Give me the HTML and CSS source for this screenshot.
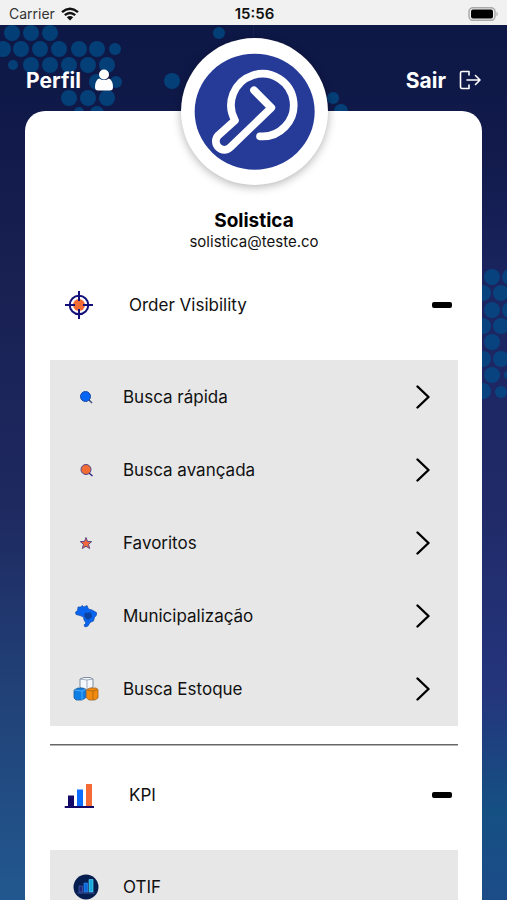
FILE: index.html
```html
<!DOCTYPE html>
<html lang="pt-BR">
<head>
<meta charset="utf-8">
<meta name="viewport" content="width=device-width, initial-scale=1">
<title>Perfil</title>
<link rel="stylesheet" href="styles.css">
</head>
<body>
<div class="app">
  <div class="status">
    <div class="carrier">
      <span>Carrier</span>
      <svg width="18" height="14" viewBox="0 0 18 14" fill="none" stroke="#111" stroke-width="2.4"><path d="M1 5.2Q9-1.6 17 5.2"/><path d="M3.8 8.2Q9 3.8 14.2 8.2"/><path d="M9 13.5L5.8 10.3Q9 7.8 12.2 10.3Z" fill="#111" stroke="none"/></svg>
    </div>
    <time class="clock">15:56</time>
    <svg class="battery" width="32" height="14" viewBox="0 0 32 14"><rect x="1" y=".7" width="26" height="12.6" rx="4" fill="#eee" stroke="#aaa" stroke-width="1.5"/><rect x="3" y="2.6" width="22" height="8.8" rx="2" fill="#000"/><path d="M28.5 4.5Q31 7 28.5 9.5Z" fill="#aaa"/></svg>
  </div>
  <main class="stage">
    <svg class="dots dots-left" width="360" height="100" viewBox="0 25 360 100" aria-hidden="true">
      <circle cx="12" cy="33" r="8"/><circle cx="31" cy="33" r="8"/><circle cx="50" cy="33" r="8"/>
      <circle cx="3" cy="49" r="8"/><circle cx="21" cy="49" r="8"/><circle cx="40" cy="49" r="8"/><circle cx="59" cy="49" r="8"/><circle cx="79" cy="49" r="8"/><circle cx="97" cy="49" r="8"/><circle cx="115" cy="49" r="6"/>
      <circle cx="13" cy="65" r="5"/><circle cx="31" cy="65" r="8"/><circle cx="50" cy="65" r="8"/><circle cx="69" cy="65" r="8"/><circle cx="88" cy="65" r="8"/><circle cx="107" cy="65" r="8"/>
      <circle cx="97" cy="82" r="8"/><circle cx="116" cy="82" r="6"/>
      <circle cx="69" cy="98" r="8"/><circle cx="88" cy="98" r="8"/><circle cx="107" cy="98" r="8"/><circle cx="79" cy="112" r="5"/><circle cx="97" cy="113" r="7"/>
      <circle cx="219" cy="33" r="6"/><circle cx="172" cy="81" r="8"/><circle cx="333" cy="98" r="6"/><circle cx="341" cy="111" r="7"/>
    </svg>
    <svg class="dots dots-right" width="25" height="130" viewBox="482 269 25 130" aria-hidden="true">
      <circle cx="492" cy="277" r="8"/><circle cx="510" cy="277" r="8"/><circle cx="483" cy="293" r="8"/><circle cx="501" cy="293" r="8"/><circle cx="492" cy="310" r="8"/><circle cx="510" cy="310" r="8"/><circle cx="483" cy="326" r="8"/><circle cx="501" cy="326" r="8"/><circle cx="492" cy="342" r="8"/><circle cx="483" cy="359" r="8"/><circle cx="501" cy="359" r="8"/><circle cx="492" cy="375" r="8"/><circle cx="508" cy="375" r="4"/><circle cx="483" cy="391" r="8"/><circle cx="501" cy="392" r="6"/>
    </svg>
    <nav class="topbar">
      <a class="toplink" href="#perfil">Perfil
        <svg width="20" height="22" viewBox="0 0 20 22" fill="#fff"><path d="M5 9.500Q1 11.500 1 18Q1 21.500 4 21.500H16Q19 21.500 19 18Q19 11.500 15 9.500Q10 12.500 5 9.500Z"/><circle cx="10" cy="5.500" r="5"/></svg>
      </a>
      <a class="toplink" href="#sair">Sair
        <svg width="22" height="20" viewBox="0 0 22 20" fill="none" stroke="#fff" stroke-width="1.6" stroke-linecap="round" stroke-linejoin="round"><path d="M10 1.5H3Q1.5 1.5 1.5 3V16.5Q1.5 18.5 3 18.5H10V15M10 1.5V5M8 10H21M16.500 5.500L21 10L16.500 14.500"/></svg>
      </a>
    </nav>
    <section class="card">
      <svg class="avatar" viewBox="31 21 441 441" role="img" aria-label="Solistica">
        <ellipse cx="252" cy="242" rx="180" ry="174" fill="#263a98"/>
        <path d="M268 316A94 94 0 1 0 193 268L143 313A25 25 0 0 0 179 349L302 230L250 178" fill="none" stroke="#fff" stroke-width="23" stroke-linecap="round" stroke-linejoin="round"/>
      </svg>
      <h1 class="name">Solistica</h1>
      <p class="email">solistica@teste.co</p>

      <section class="group">
        <button class="group-head" type="button" aria-expanded="true">
          <svg class="group-icon" viewBox="0 0 30 30" fill="none"><circle cx="15" cy="15" r="6" fill="#f26b35"/><circle cx="15" cy="15" r="9.300" stroke="#14107a" stroke-width="2"/><path d="M15 1V11M15 19V29M1 15H11M19 15H29" stroke="#14107a" stroke-width="2"/></svg>
          <span class="label">Order Visibility</span>
          <span class="minus"></span>
        </button>
        <ul class="menu">
          <li><a class="item" href="#rapida">
            <svg class="item-icon" viewBox="0 0 26 26"><path d="M16 16L19 19" stroke="#3a4a78" stroke-width="1.4"/><circle cx="12.500" cy="12.500" r="5" fill="#0866f5" stroke="#1748a5"/></svg>
            <span class="label">Busca rápida</span><svg class="chevron" viewBox="0 0 14 24"><path d="M1.500 1.500L12.500 12L1.500 22.500"/></svg></a></li>
          <li><a class="item" href="#avancada">
            <svg class="item-icon" viewBox="0 0 26 26"><path d="M16 16L19.500 19" stroke="#29237a" stroke-width="1.400"/><circle cx="13" cy="12.500" r="5" fill="#f26b35" stroke="#51458a"/></svg>
            <span class="label">Busca avançada</span><svg class="chevron" viewBox="0 0 14 24"><path d="M1.500 1.500L12.500 12L1.500 22.500"/></svg></a></li>
          <li><a class="item" href="#favoritos">
            <svg class="item-icon" viewBox="0 0 26 26"><path d="M13 7.500L14.500 11.500L18.700 11.600L15.500 14.300L16.600 18.500L13 16.200L9.400 18.500L10.500 14.300L7.300 11.600L11.500 11.500Z" fill="#f4683d" stroke="#5b477f"/></svg>
            <span class="label">Favoritos</span><svg class="chevron" viewBox="0 0 14 24"><path d="M1.500 1.500L12.500 12L1.500 22.500"/></svg></a></li>
          <li><a class="item" href="#municipalizacao">
            <svg class="item-icon" viewBox="0 0 26 26"><path d="M5 4L8 4L9 2.500L11 4L14 2.500L15.500 6L19 7L23.500 9.500L23.500 12L21.500 14.500L20.500 18L17 19.500L15 23L12 24L11 22L13 20L11 17L10.500 14L7 12.500L3 11.500L2.500 9L4.500 7.500Z" fill="#0965ef" stroke="#174fae" stroke-width=".7"/><path d="M11.500 10L18 9.500L19 14L15 17L11.500 14Z" fill="#0b429f"/></svg>
            <span class="label">Municipalização</span><svg class="chevron" viewBox="0 0 14 24"><path d="M1.500 1.500L12.500 12L1.500 22.500"/></svg></a></li>
          <li><a class="item" href="#estoque">
            <svg class="item-icon" viewBox="0 0 26 26" stroke-width=".8" stroke-linejoin="round"><path d="M7 3L11 1.500H17L20 3V11L17 13H9L7 11Z" fill="#f4f7fc" stroke="#66758d"/><path d="M7 3L14 4L20 3M14 4V12" fill="none" stroke="#8f9db0"/><path d="M1 14L5 12H10L12.500 13.500V22L9 24H3L1 22Z" fill="#0c7fe6" stroke="#245b94"/><path d="M1 14L9 15L12.500 13.500M9 15V24" fill="none" stroke="#63b6ff"/><path d="M13.500 14L17 12H23L25 13.500V22L22 24H16L13.500 22Z" fill="#f18a0d" stroke="#a1672c"/><path d="M13.500 14L20 15L25 13.500M20 15V24" fill="none" stroke="#a96314"/></svg>
            <span class="label">Busca Estoque</span><svg class="chevron" viewBox="0 0 14 24"><path d="M1.500 1.500L12.500 12L1.500 22.500"/></svg></a></li>
        </ul>
      </section>
      <hr class="rule">
      <section class="group">
        <button class="group-head" type="button" aria-expanded="true">
          <svg class="group-icon" viewBox="0 0 30 30"><path d="M4 15.500H10V27H4Z" fill="#130768"/><path d="M13 9.500H19V27H13Z" fill="#0d6dff"/><path d="M22 4H28V27H22Z" fill="#f46b35"/><path d="M1.500 27H29.500" stroke="#130768" stroke-width="2" stroke-linecap="round"/></svg>
          <span class="label">KPI</span>
          <span class="minus"></span>
        </button>
        <ul class="menu">
          <li><a class="item" href="#otif">
            <svg class="item-icon" viewBox="0 0 26 26"><circle cx="13" cy="13" r="12.500" fill="#061d50"/><path d="M6 12H9.500V18H6Z" fill="#222477" stroke="#496bc0" stroke-width=".6"/><path d="M11 9H14.500V18H11Z" fill="#0869df" stroke="#3c94ff" stroke-width=".6"/><path d="M16 5.500H20V18H16Z" fill="#1aa8dc" stroke="#62e3ff" stroke-width=".6"/><path d="M4.500 19H21.500" stroke="#3b559e"/></svg>
            <span class="label">OTIF</span></a></li>
        </ul>
      </section>
    </section>
  </main>
</div>
</body>
</html>
```
FILE: styles.css
```css
* { box-sizing: border-box; }

body {
  margin: 0;
  font-family: Inter, "Liberation Sans", sans-serif;
  color: #111;
}

.app {
  height: 100vh;
  display: flex;
  flex-direction: column;
  overflow: hidden;
}

.status {
  flex: none;
  height: 25px;
  padding: 2px 7px 0 9px;
  display: grid;
  grid-template-columns: 1fr auto 1fr;
  align-items: center;
  background: #f1f1f1;
  font-size: 14px;
}

.carrier { display: flex; align-items: center; gap: 6px; color: #333; }
.clock { font-size: 15px; font-weight: 600; }
.battery { justify-self: end; }

.stage {
  position: relative;
  flex: 1;
  min-height: 0;
  overflow: hidden;
  padding: 0 25px;
  background:
    linear-gradient(#0d1846 0%, #111a4a 14%, #192153 30%, #1e2960 55%, #214379 78%, #22588f 100%) 0 0 / 50% 100% no-repeat,
    linear-gradient(#0d1846 0%, #111a4a 14%, #1b2560 30%, #202a68 55%, #24357c 76%, #155083 90%, #1c4c88 100%) 100% 0 / 50% 100% no-repeat,
    #1e2960;
}

.dots { position: absolute; fill: #00508c; opacity: .7; }
.dots-left { top: 0; left: 0; }
.dots-right { top: 244px; right: 0; }

.topbar {
  position: relative;
  height: 86px;
  padding: 24px 1px 0;
  display: flex;
  justify-content: space-between;
}

.toplink {
  display: flex;
  align-items: center;
  gap: 13px;
  height: 62px;
  color: #fff;
  font-size: 21px;
  font-weight: 700;
  text-decoration: none;
}

.card {
  position: relative;
  min-height: 100%;
  padding: 0 24px 24px 25px;
  display: flex;
  flex-direction: column;
  background: #fff;
  border-radius: 20px 20px 0 0;
}

.avatar {
  width: 147px;
  height: 147px;
  margin-top: -73px;
  align-self: center;
  flex: none;
  border-radius: 50%;
  background: #fff;
  box-shadow: 0 2px 10px rgba(0, 0, 0, .3);
}

.name {
  margin: 23px 0 0;
  font-size: 19px;
  line-height: 26px;
  font-weight: 700;
  text-align: center;
  color: #000;
}

.email {
  margin: 0 0 6px;
  font-size: 15px;
  line-height: 16px;
  text-align: center;
}

.group-head {
  width: 100%;
  height: 98px;
  margin: 0 0 6px;
  padding: 0 6px 0 14px;
  display: flex;
  align-items: center;
  border: 0;
  background: none;
  color: inherit;
  font: inherit;
  text-align: left;
}

.group-icon { width: 30px; height: 30px; margin-right: 35px; }
.label { flex: 1; font-size: 17px; line-height: 24px; }
.minus { width: 20px; height: 6px; border-radius: 2px; background: #000; }

.menu {
  margin: 0;
  padding: 0 0 1px;
  list-style: none;
  background: #e7e7e7;
}

.item {
  height: 73px;
  padding: 0 28px 0 23px;
  display: flex;
  align-items: center;
  color: inherit;
  text-decoration: none;
}

.item-icon { width: 26px; height: 26px; margin-right: 24px; }

.chevron {
  width: 14px;
  height: 24px;
  fill: none;
  stroke: #000;
  stroke-width: 2.4;
  stroke-linecap: round;
  stroke-linejoin: round;
}

.rule {
  width: 100%;
  height: 2px;
  margin: 18px 0 0;
  border: 0;
  border-top: 1px solid #666;
  border-bottom: 1px solid #b5b5b5;
}
```
